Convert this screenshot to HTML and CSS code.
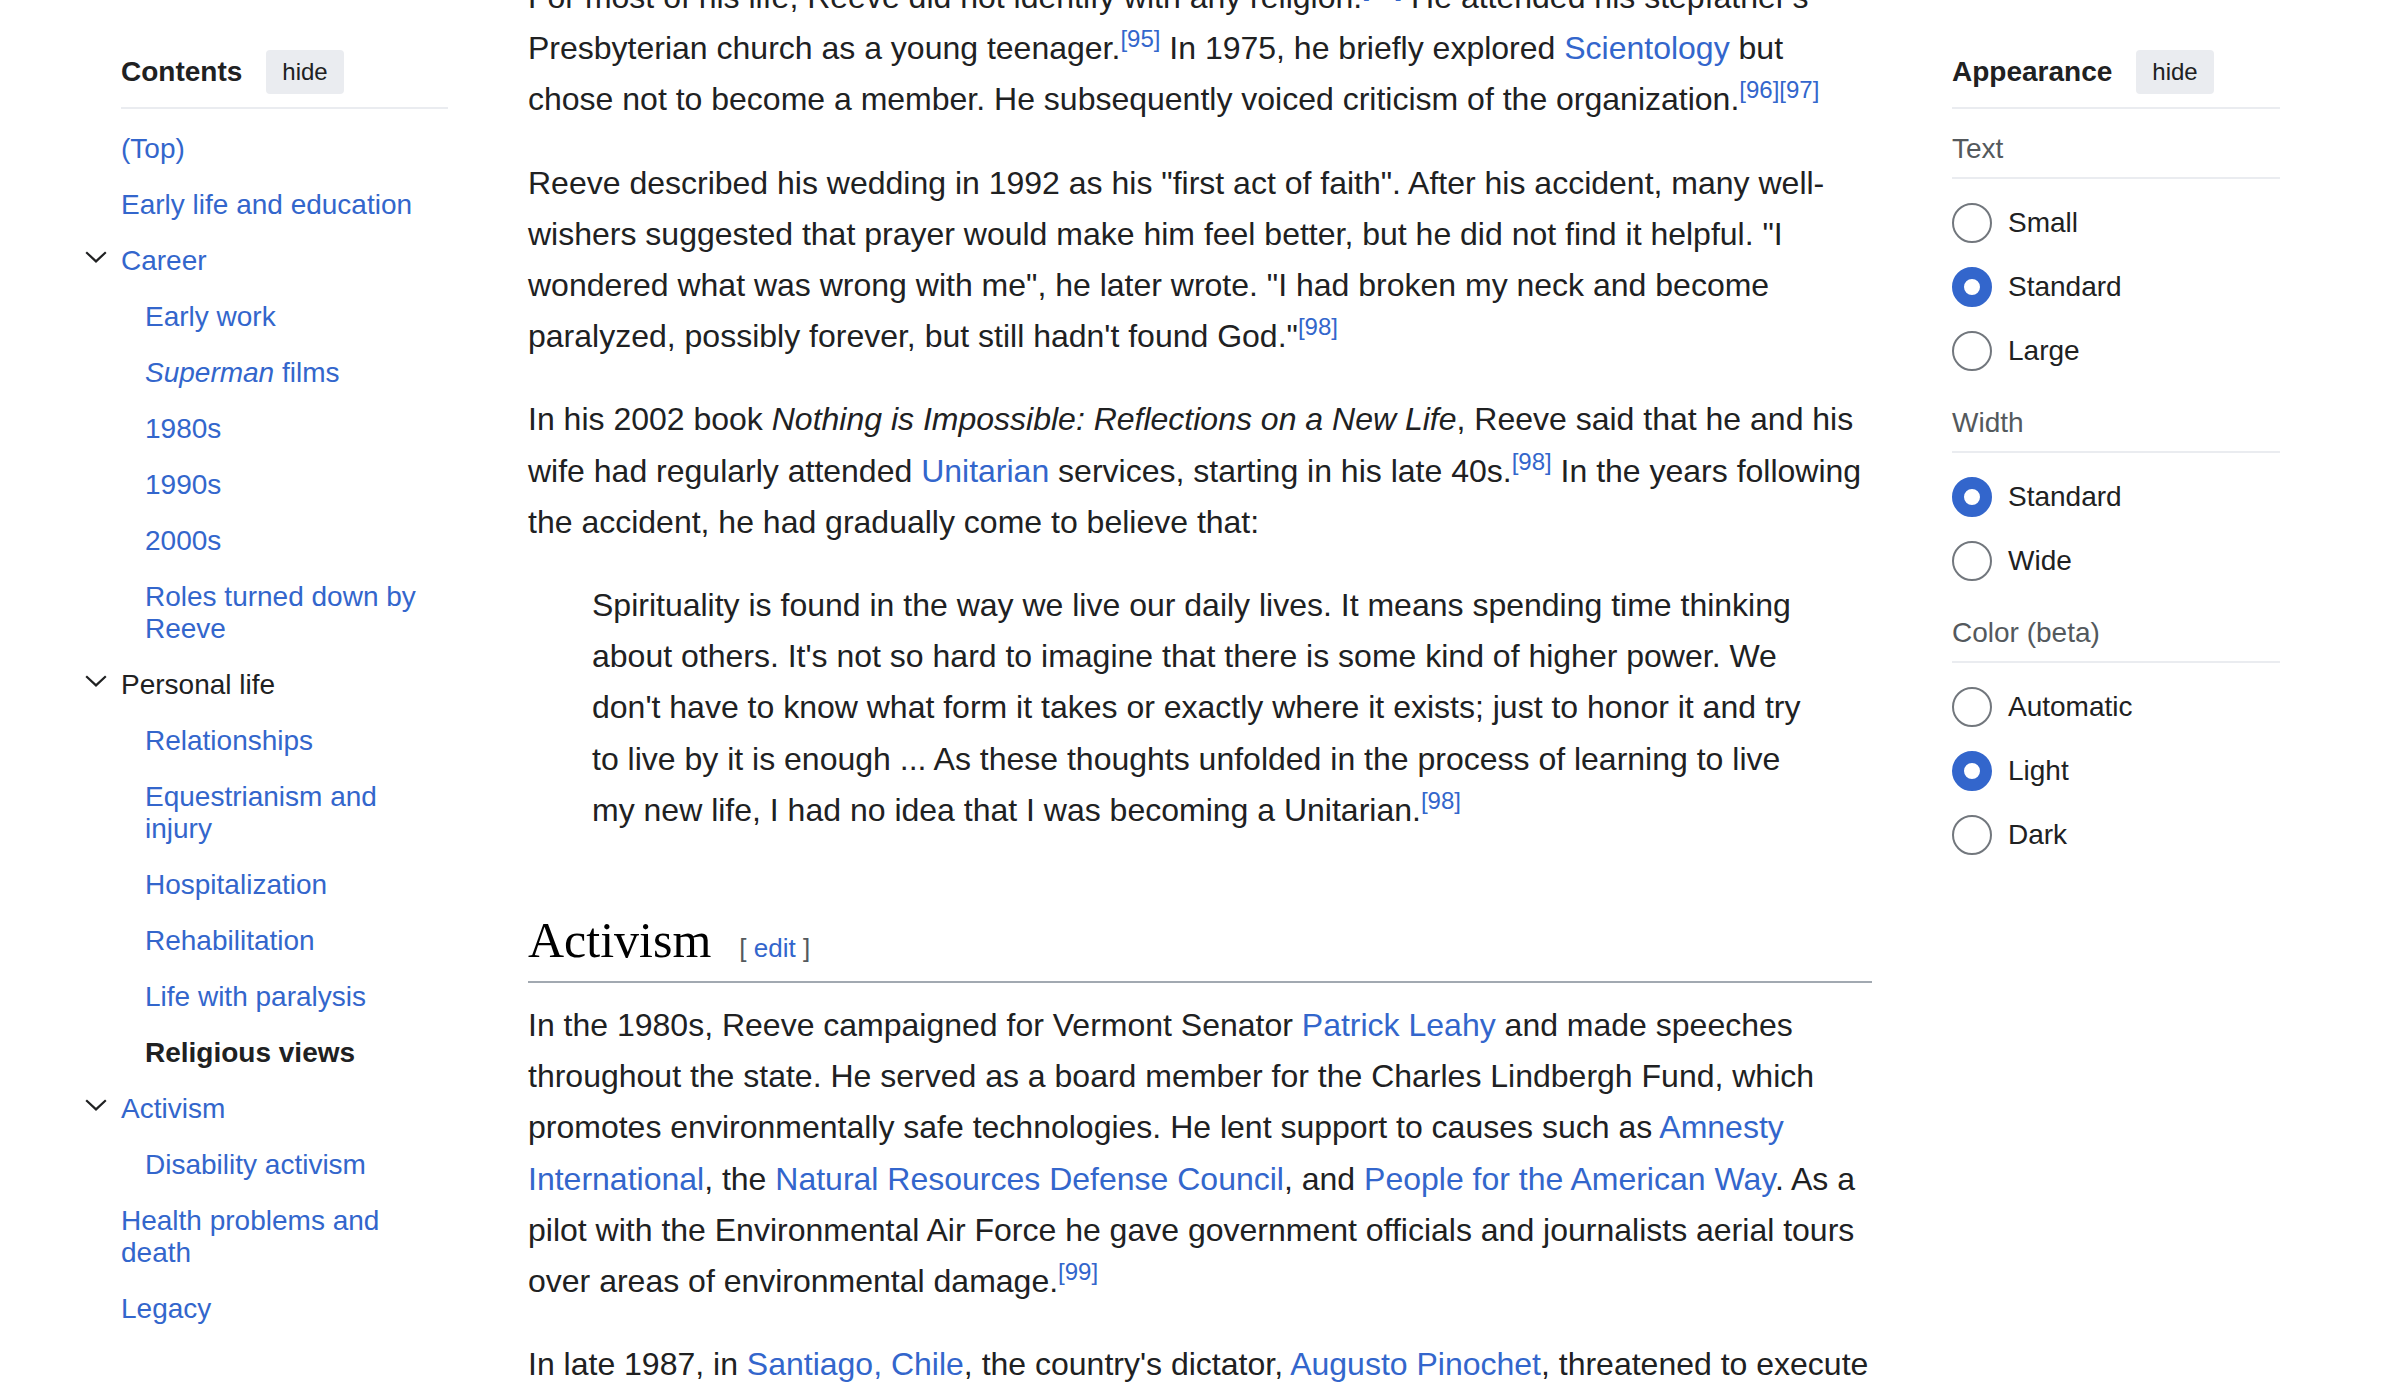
FILE: index.html
```html
<!DOCTYPE html>
<html lang="en">
<head>
<meta charset="utf-8">
<title>Christopher Reeve</title>
<link rel="stylesheet" href="styles.css">
</head>
<body>
<div class="page">
  <nav class="toc">
    <div class="side-head">
      <h2 class="side-title">Contents</h2>
      <button class="hide-btn" type="button">hide</button>
    </div>
    <ul class="toc-list">
      <li><a class="toc-link" href="#">(Top)</a></li>
      <li><a class="toc-link" href="#">Early life and education</a></li>
      <li>
        <div class="toc-row">
          <span class="toc-toggle"><svg width="22" height="12" viewBox="0 0 22 12"><polyline points="1.2,1.2 11,10.4 20.8,1.2" fill="none" stroke="#202122" stroke-width="2.2"/></svg></span>
          <a href="#">Career</a>
        </div>
        <ul class="toc-sub">
          <li><a class="toc-link" href="#">Early work</a></li>
          <li><a class="toc-link" href="#"><i>Superman</i> films</a></li>
          <li><a class="toc-link" href="#">1980s</a></li>
          <li><a class="toc-link" href="#">1990s</a></li>
          <li><a class="toc-link" href="#">2000s</a></li>
          <li><a class="toc-link" href="#">Roles turned down by Reeve</a></li>
        </ul>
      </li>
      <li>
        <div class="toc-row">
          <span class="toc-toggle"><svg width="22" height="12" viewBox="0 0 22 12"><polyline points="1.2,1.2 11,10.4 20.8,1.2" fill="none" stroke="#202122" stroke-width="2.2"/></svg></span>
          <a href="#" class="toc-active-parent">Personal life</a>
        </div>
        <ul class="toc-sub">
          <li><a class="toc-link" href="#">Relationships</a></li>
          <li><a class="toc-link" href="#">Equestrianism and injury</a></li>
          <li><a class="toc-link" href="#">Hospitalization</a></li>
          <li><a class="toc-link" href="#">Rehabilitation</a></li>
          <li><a class="toc-link" href="#">Life with paralysis</a></li>
          <li><a class="toc-link toc-current" href="#">Religious views</a></li>
        </ul>
      </li>
      <li>
        <div class="toc-row">
          <span class="toc-toggle"><svg width="22" height="12" viewBox="0 0 22 12"><polyline points="1.2,1.2 11,10.4 20.8,1.2" fill="none" stroke="#202122" stroke-width="2.2"/></svg></span>
          <a href="#">Activism</a>
        </div>
        <ul class="toc-sub">
          <li><a class="toc-link" href="#">Disability activism</a></li>
        </ul>
      </li>
      <li><a class="toc-link" href="#">Health problems and death</a></li>
      <li><a class="toc-link" href="#">Legacy</a></li>
    </ul>
  </nav>

  <main class="content">
    <p>For most of his life, Reeve did not identify with any religion.<sup class="ref"><a href="#">[94]</a></sup> He attended his stepfather's Presbyterian church as a young teenager.<sup class="ref"><a href="#">[95]</a></sup> In 1975, he briefly explored <a href="#">Scientology</a> but chose not to become a member. He subsequently voiced criticism of the organization.<sup class="ref"><a href="#">[96]</a></sup><sup class="ref"><a href="#">[97]</a></sup></p>
    <p>Reeve described his wedding in 1992 as his "first act of faith". After his accident, many well-wishers suggested that prayer would make him feel better, but he did not find it helpful. "I wondered what was wrong with me", he later wrote. "I had broken my neck and become paralyzed, possibly forever, but still hadn't found God."<sup class="ref"><a href="#">[98]</a></sup></p>
    <p>In his 2002 book <i>Nothing is Impossible: Reflections on a New Life</i>, Reeve said that he and his wife had regularly attended <a href="#">Unitarian</a> services, starting in his late 40s.<sup class="ref"><a href="#">[98]</a></sup> In the years following the accident, he had gradually come to believe that:</p>
    <blockquote class="quote">Spirituality is found in the way we live our daily lives. It means spending time thinking about others. It's not so hard to imagine that there is some kind of higher power. We don't have to know what form it takes or exactly where it exists; just to honor it and try to live by it is enough ... As these thoughts unfolded in the process of learning to live my new life, I had no idea that I was becoming a Unitarian.<sup class="ref"><a href="#">[98]</a></sup></blockquote>
    <h2 class="section-heading"><span class="headline">Activism</span><span class="editsection"><span class="bracket">[</span> <a href="#">edit</a> <span class="bracket">]</span></span></h2>
    <p>In the 1980s, Reeve campaigned for Vermont Senator <a href="#">Patrick Leahy</a> and made speeches throughout the state. He served as a board member for the Charles Lindbergh Fund, which promotes environmentally safe technologies. He lent support to causes such as <a href="#">Amnesty International</a>, the <a href="#">Natural Resources Defense Council</a>, and <a href="#">People for the American Way</a>. As a pilot with the Environmental Air Force he gave government officials and journalists aerial tours over areas of environmental damage.<sup class="ref"><a href="#">[99]</a></sup></p>
    <p>In late 1987, in <a href="#">Santiago, Chile</a>, the country's dictator, <a href="#">Augusto Pinochet</a>, threatened to execute 77 actors. Reeve flew to Santiago and led a march in support of them.</p>
  </main>

  <aside class="appearance">
    <div class="side-head">
      <h2 class="side-title">Appearance</h2>
      <button class="hide-btn" type="button">hide</button>
    </div>
    <div class="pref-group">
      <div class="pref-label">Text</div>
      <div class="pref-options">
        <label class="radio"><span class="radio-circle"></span><span>Small</span></label>
        <label class="radio"><span class="radio-circle is-checked"></span><span>Standard</span></label>
        <label class="radio"><span class="radio-circle"></span><span>Large</span></label>
      </div>
    </div>
    <div class="pref-group">
      <div class="pref-label">Width</div>
      <div class="pref-options">
        <label class="radio"><span class="radio-circle is-checked"></span><span>Standard</span></label>
        <label class="radio"><span class="radio-circle"></span><span>Wide</span></label>
      </div>
    </div>
    <div class="pref-group">
      <div class="pref-label">Color (beta)</div>
      <div class="pref-options">
        <label class="radio"><span class="radio-circle"></span><span>Automatic</span></label>
        <label class="radio"><span class="radio-circle is-checked"></span><span>Light</span></label>
        <label class="radio"><span class="radio-circle"></span><span>Dark</span></label>
      </div>
    </div>
  </aside>
</div>
</body>
</html>
```

FILE: styles.css
```css
* {
  box-sizing: border-box;
}

html,
body {
  margin: 0;
  padding: 0;
  background: #ffffff;
  overflow: hidden;
  height: 1398px;
}

body {
  font-family: "Liberation Sans", Arial, Helvetica, sans-serif;
  color: #202122;
}

a {
  color: #3366cc;
  text-decoration: none;
}

.page {
  display: grid;
  grid-template-columns: 327px 1344px 328px;
  column-gap: 80px;
  padding: 0 120px 0 121px;
  align-items: start;
}

/* ---------- sidebar headers ---------- */
.side-head {
  display: flex;
  align-items: center;
  gap: 24px;
  height: 44px;
  margin-top: 50px;
  padding-bottom: 13px;
  border-bottom: 2px solid #eaecf0;
  box-sizing: content-box;
}

.side-title {
  margin: 0;
  font-size: 28px;
  line-height: 1;
  font-weight: bold;
  color: #202122;
}

.hide-btn {
  height: 44px;
  padding: 0 16px;
  border: 0;
  border-radius: 4px;
  background: #eaecf0;
  color: #202122;
  font-family: "Liberation Sans", Arial, sans-serif;
  font-size: 24px;
}

/* ---------- table of contents ---------- */
.toc-list,
.toc-sub {
  list-style: none;
  margin: 0;
  padding: 0;
}

.toc-list {
  margin-top: 12px;
  font-size: 28px;
  line-height: 32px;
  padding-right: 6px;
}

.toc-sub {
  padding-left: 24px;
}

.toc-link {
  display: block;
  padding: 12px 0;
}

.toc-row {
  display: flex;
  align-items: flex-start;
  padding: 12px 0;
}

.toc-toggle {
  display: flex;
  width: 36px;
  margin-left: -36px;
  padding-top: 6px;
  flex-shrink: 0;
}

.toc-active-parent {
  color: #202122;
}

.toc-current {
  color: #202122;
  font-weight: bold;
}

/* ---------- article ---------- */
.content {
  margin-top: -28px;
  font-size: 32px;
  line-height: 51.2px;
  color: #202122;
}

.content p {
  margin: 0 0 32px;
}

.quote {
  margin: 0 0 32px;
  padding: 0 64px;
}

.ref {
  font-size: 24px;
  line-height: 1;
  vertical-align: 12px;
}

.section-heading {
  margin: 74px 0 17px;
  padding-bottom: 11px;
  border-bottom: 2px solid #a2a9b1;
  font-family: "Liberation Serif", "Times New Roman", serif;
  font-size: 50px;
  font-weight: normal;
  line-height: 60px;
}

.headline {
  color: #000000;
}

.editsection {
  margin-left: 28px;
  font-family: "Liberation Sans", Arial, sans-serif;
  font-size: 26px;
  line-height: 1;
}

.bracket {
  color: #54595d;
}

/* ---------- appearance ---------- */
.pref-group {
  padding-top: 12px;
}

.pref-group + .pref-group {
  padding-top: 24px;
}

.pref-label {
  padding: 12px 0;
  font-size: 28px;
  line-height: 32px;
  color: #54595d;
  border-bottom: 2px solid #eaecf0;
}

.pref-options {
  display: flex;
  flex-direction: column;
  gap: 24px;
  padding-top: 24px;
}

.radio {
  display: flex;
  align-items: center;
  gap: 16px;
  height: 40px;
  font-size: 28px;
  line-height: 32px;
  color: #202122;
}

.radio-circle {
  width: 40px;
  height: 40px;
  flex-shrink: 0;
  border: 2px solid #72777d;
  border-radius: 50%;
  background: #ffffff;
}

.radio-circle.is-checked {
  border: 12px solid #3366cc;
}
```
